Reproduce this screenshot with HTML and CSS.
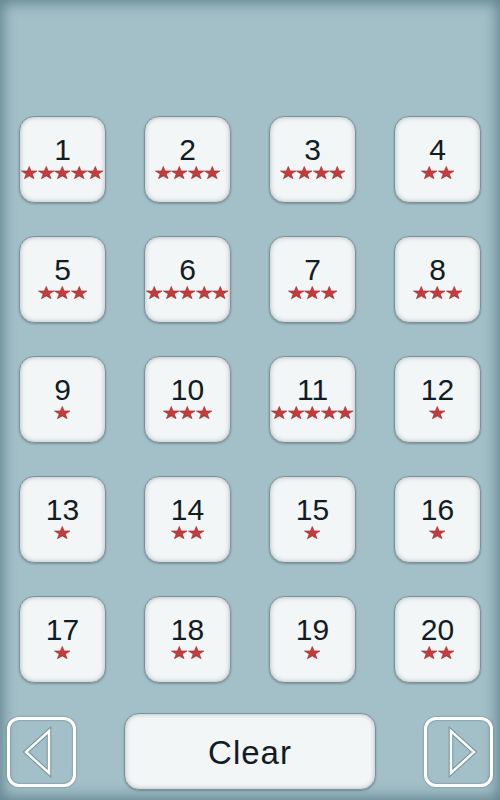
FILE: index.html
```html
<!DOCTYPE html>
<html lang="en">
<head>
  <meta charset="UTF-8" />
  <meta name="viewport" content="width=device-width, initial-scale=1.0" />
  <title>Levels</title>
  <link rel="stylesheet" href="styles.css">
</head>
<body>
  <svg class="defs" width="0" height="0">
    <symbol id="star" viewBox="0 0 16.5 13">
      <polygon points="8.25,0.4 10.14,4.97 16.1,4.97 11.3,8.04 13.1,12.7 8.25,9.94 3.4,12.7 5.2,8.04 0.4,4.97 6.36,4.97" />
    </symbol>
  </svg>

  <div class="screen">
    <div class="levels" id="levels"></div>

    <div class="bottom-bar">
      <button class="arrow-btn">
        <svg width="63" height="64" viewBox="0 0 63 64">
          <polygon class="tri-edge" points="16,32 39,11 39,53" />
          <polygon class="tri" points="16,32 39,11 39,53" />
        </svg>
      </button>
      <button class="clear-btn">Clear</button>
      <button class="arrow-btn">
        <svg width="63" height="64" viewBox="0 0 63 64">
          <polygon class="tri-edge" points="47,32 24,11 24,53" />
          <polygon class="tri" points="47,32 24,11 24,53" />
        </svg>
      </button>
    </div>
  </div>

  <script>
    const stars = [5, 4, 4, 2, 3, 5, 3, 3, 1, 3, 5, 1, 1, 2, 1, 1, 1, 2, 1, 2];
    const grid = document.getElementById("levels");

    stars.forEach(function (count, i) {
      const tile = document.createElement("div");
      tile.className = "tile";
      let row = "";
      for (let s = 0; s < count; s++) {
        row += '<svg class="star"><use href="#star"></use></svg>';
      }
      tile.innerHTML = `
        <div class="num">${i + 1}</div>
        <div class="stars">${row}</div>
      `;
      grid.appendChild(tile);
    });
  </script>
</body>
</html>
```

FILE: styles.css
```css
body {
  margin: 0;
  font-family: "Liberation Sans", Arial, sans-serif;
  background: #a3bfc7;
}
.defs {
  position: absolute;
}
.screen {
  width: 500px;
  height: 800px;
  box-sizing: border-box;
  background: #a3bfc7;
  box-shadow: inset 0 0 14px 3px #60848e;
  padding-top: 116px;
}
.levels {
  display: grid;
  grid-template-columns: repeat(4, 87px);
  grid-auto-rows: 87px;
  column-gap: 38px;
  row-gap: 33px;
  padding-left: 19px;
}
.tile {
  box-sizing: border-box;
  background: #f3f6f7;
  border: 1px solid #7a939a;
  border-radius: 15px;
  box-shadow: inset 0 0 5px rgba(60, 80, 90, 0.4), 0 1px 2px rgba(40, 60, 70, 0.35);
  padding-top: 18px;
  display: flex;
  flex-direction: column;
  align-items: center;
}
.num {
  font-size: 30px;
  line-height: 30px;
  color: #111c24;
}
.stars {
  display: flex;
  margin-top: 1px;
  height: 13px;
}
.star {
  width: 16.5px;
  height: 13px;
  fill: #c53a3b;
  stroke: #9a2b2b;
  stroke-width: 0.6;
}
.bottom-bar {
  display: flex;
  justify-content: space-between;
  align-items: center;
  padding: 0 7px;
  margin-top: 30px;
}
.arrow-btn {
  box-sizing: border-box;
  width: 69px;
  height: 70px;
  padding: 0;
  background: transparent;
  border: 3px solid #fff;
  border-radius: 12px;
  box-shadow: 0 0 2px rgba(50, 70, 80, 0.6), inset 0 0 2px rgba(50, 70, 80, 0.6);
}
.arrow-btn svg {
  display: block;
}
.tri {
  fill: none;
  stroke: #fff;
  stroke-width: 2.5;
}
.tri-edge {
  fill: none;
  stroke: rgba(70, 95, 105, 0.5);
  stroke-width: 4.5;
}
.clear-btn {
  box-sizing: border-box;
  width: 252px;
  height: 77px;
  background: #f3f6f7;
  border: 1px solid #7a939a;
  border-radius: 15px;
  box-shadow: inset 0 0 5px rgba(60, 80, 90, 0.4), 0 1px 2px rgba(40, 60, 70, 0.35);
  font-family: "Liberation Sans", Arial, sans-serif;
  font-size: 33px;
  letter-spacing: 1px;
  padding: 2px 0 0;
  color: #111c24;
}
```
